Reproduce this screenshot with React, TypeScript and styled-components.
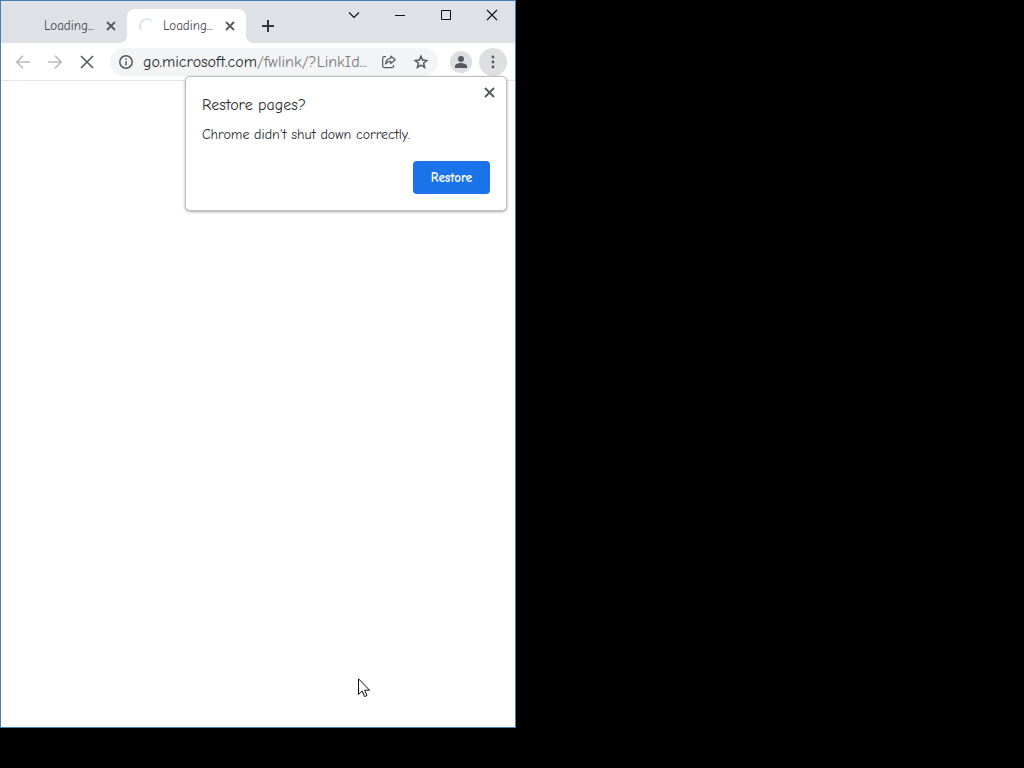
import React from "react";
import styled, { createGlobalStyle, keyframes } from "styled-components";

const GlobalStyle = createGlobalStyle`
  * { box-sizing: border-box; }
  body {
    margin: 0;
    background: #000;
    color: #2b2c2f;
    font-family: "Comic Sans MS", "Comic Neue", "Noto Sans", sans-serif;
  }
  button, input { font-family: inherit; }
`;

const Desktop = styled.div`
  position: relative;
  display: flex;
  min-height: 100vh;
  padding-bottom: 40px;
  background: #000;
`;

const Window = styled.main`
  position: relative;
  display: flex;
  flex: 0 1 516px;
  flex-direction: column;
  min-width: 0;
  border: 1px solid #4a7fb5;
  background: #fff;
`;

const TabStrip = styled.header`
  display: flex;
  align-items: flex-end;
  height: 42px;
  padding-left: 7px;
  background: #dee1e6;
`;

const Tab = styled.div<{ $active?: boolean }>`
  position: relative;
  display: flex;
  align-items: center;
  gap: 8px;
  flex: 0 1 119px;
  min-width: 0;
  height: 34px;
  padding: 0 8px 0 12px;
  border-radius: 8px 8px 0 0;
  background: ${(p) => (p.$active ? "#fff" : "transparent")};

  &::before, &::after {
    content: "";
    display: ${(p) => (p.$active ? "block" : "none")};
    position: absolute;
    bottom: 0;
    width: 8px;
    height: 8px;
  }
  &::before {
    left: -8px;
    background: radial-gradient(circle at 0 0, transparent 8px, #fff 8px);
  }
  &::after {
    right: -8px;
    background: radial-gradient(circle at 100% 0, transparent 8px, #fff 8px);
  }
`;

const TabLabel = styled.span`
  flex: 1;
  color: #45484c;
  font-size: 13px;
  line-height: 16px;
  white-space: nowrap;
`;

const spin = keyframes`
  to { transform: rotate(360deg); }
`;

const Spinner = styled.svg<{ $visible?: boolean }>`
  flex: none;
  width: 16px;
  height: 16px;
  visibility: ${(p) => (p.$visible ? "visible" : "hidden")};
  animation: ${spin} 1.5s linear infinite paused;
`;

const IconButton = styled.button<{ $size: number; $filled?: boolean; $dim?: boolean }>`
  display: flex;
  flex: none;
  align-items: center;
  justify-content: center;
  width: ${(p) => p.$size}px;
  height: ${(p) => p.$size}px;
  padding: 0;
  border: 0;
  border-radius: 50%;
  background: ${(p) => (p.$filled ? "#dedfe0" : "transparent")};
  color: ${(p) => (p.$dim ? "#b8babd" : "#55585c")};
`;

const NewTab = styled(IconButton)`
  margin: 0 0 3px 8px;
  color: #33363a;
`;

const WindowControls = styled.div`
  display: flex;
  align-self: flex-start;
  margin-left: auto;
`;

const WindowButton = styled.button`
  display: flex;
  align-items: center;
  justify-content: center;
  width: 46px;
  height: 28px;
  padding: 0;
  border: 0;
  background: transparent;
  color: #111;
`;

const Toolbar = styled.nav`
  display: flex;
  align-items: center;
  gap: 4px;
  height: 38px;
  padding: 0 8px;
  border-bottom: 1px solid #e4e5e7;
  background: #fff;
`;

const Omnibox = styled.div`
  display: flex;
  flex: 1;
  align-items: center;
  gap: 4px;
  min-width: 0;
  height: 28px;
  margin: 0 5px;
  padding: 0 3px 0 1px;
  border-radius: 14px;
  background: #f3f4f5;
`;

const Address = styled.a`
  flex: 1;
  min-width: 0;
  overflow: hidden;
  color: #77797d;
  font-size: 16px;
  line-height: 20px;
  text-decoration: none;
  white-space: nowrap;
`;

const Host = styled.span`
  color: #2b2c2f;
`;

const Page = styled.section`
  flex: 1;
  background: #fff;
`;

const Bubble = styled.section`
  position: absolute;
  top: 75px;
  right: 8px;
  width: 322px;
  max-width: 100%;
  padding: 16px;
  border: 1px solid #bfc0c2;
  border-radius: 5px;
  background: #fff;
  box-shadow: 0 1px 3px rgba(0, 0, 0, 0.35);
`;

const BubbleTitle = styled.h1`
  margin: 0 0 8px;
  font-size: 16px;
  font-weight: 400;
  line-height: 24px;
`;

const BubbleText = styled.p`
  margin: 0 0 16px;
  font-size: 14px;
  line-height: 20px;
`;

const BubbleActions = styled.div`
  display: flex;
  justify-content: flex-end;
`;

const BubbleClose = styled(IconButton)`
  position: absolute;
  top: 5px;
  right: 7px;
`;

const RestoreButton = styled.button`
  width: 77px;
  height: 33px;
  padding: 0;
  border: 0;
  border-radius: 4px;
  background: #1a73e8;
  color: #fff;
  font-size: 13px;
  font-weight: 700;
`;

const Pointer = styled.svg`
  position: absolute;
  top: 678px;
  left: 358px;
  width: 13px;
  height: 20px;
`;

const Cross = ({ size, stroke }: { size: number; stroke: number }) => (
  <svg width={size} height={size} viewBox={`0 0 ${size} ${size}`} stroke="currentColor" strokeWidth={stroke} aria-hidden>
    <path d={`M1 1L${size - 1} ${size - 1}M${size - 1} 1L1 ${size - 1}`} />
  </svg>
);

const BrowserTab = ({ active }: { active?: boolean }) => (
  <Tab $active={active}>
    <Spinner $visible={active} viewBox="0 0 16 16" fill="none" stroke="#d8e0e8" strokeWidth="1.7" aria-hidden>
      <path d="M2.4 12.2A7 7 0 0 1 13 3.1" />
    </Spinner>
    <TabLabel>Loading...</TabLabel>
    <IconButton $size={16} aria-label="Close tab">
      <Cross size={10} stroke={1.8} />
    </IconButton>
  </Tab>
);

export default function App() {
  return (
    <Desktop>
      <GlobalStyle />
      <Window>
        <TabStrip>
          <BrowserTab />
          <BrowserTab active />
          <NewTab $size={28} aria-label="New tab">
            <svg width="12" height="12" viewBox="0 0 12 12" stroke="currentColor" strokeWidth="2" aria-hidden>
              <path d="M6 0V12M0 6H12" />
            </svg>
          </NewTab>
          <WindowControls>
            <WindowButton aria-label="Search tabs">
              <svg width="12" height="8" viewBox="0 0 12 8" fill="none" stroke="currentColor" strokeWidth="1.1" aria-hidden>
                <path d="M1 1.5L6 6.5L11 1.5" />
              </svg>
            </WindowButton>
            <WindowButton aria-label="Minimize">
              <svg width="10" height="10" viewBox="0 0 10 10" stroke="currentColor" aria-hidden>
                <path d="M0 5.5H10" />
              </svg>
            </WindowButton>
            <WindowButton aria-label="Maximize">
              <svg width="10" height="10" viewBox="0 0 10 10" fill="none" stroke="currentColor" aria-hidden>
                <path d="M.5 .5H9.5V9.5H.5Z" />
              </svg>
            </WindowButton>
            <WindowButton aria-label="Close">
              <Cross size={12} stroke={1.1} />
            </WindowButton>
          </WindowControls>
        </TabStrip>
        <Toolbar>
          <IconButton $size={28} $dim aria-label="Back">
            <svg width="16" height="16" viewBox="0 0 16 16" fill="none" stroke="currentColor" strokeWidth="1.6" aria-hidden>
              <path d="M15 8H2M8 1.8L1.8 8L8 14.2" />
            </svg>
          </IconButton>
          <IconButton $size={28} $dim aria-label="Forward">
            <svg width="16" height="16" viewBox="0 0 16 16" fill="none" stroke="currentColor" strokeWidth="1.6" aria-hidden>
              <path d="M1 8H14M8 1.8L14.2 8L8 14.2" />
            </svg>
          </IconButton>
          <IconButton $size={28} aria-label="Stop">
            <Cross size={14} stroke={1.6} />
          </IconButton>
          <Omnibox>
            <IconButton $size={28} aria-label="Site information">
              <svg width="16" height="16" viewBox="0 0 16 16" fill="none" stroke="currentColor" strokeWidth="1.5" aria-hidden>
                <circle cx="9" cy="8" r="6.2" />
                <path d="M9 7.2V11.5M9 4.5V6" />
              </svg>
            </IconButton>
            <Address href="#">
              <Host>go.microsoft.com</Host>/fwlink/?LinkId...
            </Address>
            <IconButton $size={28} aria-label="Share">
              <svg width="16" height="16" viewBox="0 0 16 16" fill="none" stroke="currentColor" strokeWidth="1.2" aria-hidden>
                <path d="M5 2.7H3.2Q1.7 2.7 1.7 4.2V12.1Q1.7 13.6 3.2 13.6H11.1Q12.6 13.6 12.6 12.1V11" />
                <path strokeLinejoin="round" d="M9.8 2L14.2 5.8L9.8 9.6V7.4C7.3 7.4 5.7 8.2 4.6 10C4.9 6.9 6.5 4.6 9.8 4.2Z" />
              </svg>
            </IconButton>
            <IconButton $size={28} aria-label="Bookmark this page">
              <svg width="16" height="16" viewBox="0 0 16 16" fill="none" stroke="currentColor" strokeWidth="1.5" aria-hidden>
                <path d="M8 2.2L9.6 6.1L13.8 6.5L10.6 9.2L11.6 13.3L8 11.1L4.4 13.3L5.4 9.2L2.2 6.5L6.4 6.1Z" />
              </svg>
            </IconButton>
          </Omnibox>
          <IconButton $size={28} aria-label="Profile">
            <svg width="22" height="22" viewBox="0 0 22 22" aria-hidden>
              <circle cx="11" cy="11" r="11" fill="#dcdee3" />
              <circle cx="11" cy="8" r="3" fill="#55585f" />
              <path d="M5 17V15.2C5 13 9 12.1 11 12.1S17 13 17 15.2V17Z" fill="#55585f" />
            </svg>
          </IconButton>
          <IconButton $size={28} $filled aria-label="Menu">
            <svg width="4" height="14" viewBox="0 0 4 14" fill="currentColor" aria-hidden>
              <circle cx="2" cy="2" r="1.4" />
              <circle cx="2" cy="7" r="1.4" />
              <circle cx="2" cy="12" r="1.4" />
            </svg>
          </IconButton>
        </Toolbar>
        <Page />
        <Bubble role="dialog" aria-labelledby="restore-title">
          <BubbleTitle id="restore-title">Restore pages?</BubbleTitle>
          <BubbleText>Chrome didn't shut down correctly.</BubbleText>
          <BubbleActions>
            <RestoreButton>Restore</RestoreButton>
          </BubbleActions>
          <BubbleClose $size={20} aria-label="Dismiss">
            <Cross size={11} stroke={1.8} />
          </BubbleClose>
        </Bubble>
      </Window>
      <Pointer viewBox="0 0 13 20" fill="#fff" stroke="#111" aria-hidden>
        <path d="M.5 .8V16.5L4.2 13L6.6 18.6L9 17.5L6.7 12.2H11.6Z" />
      </Pointer>
    </Desktop>
  );
}
